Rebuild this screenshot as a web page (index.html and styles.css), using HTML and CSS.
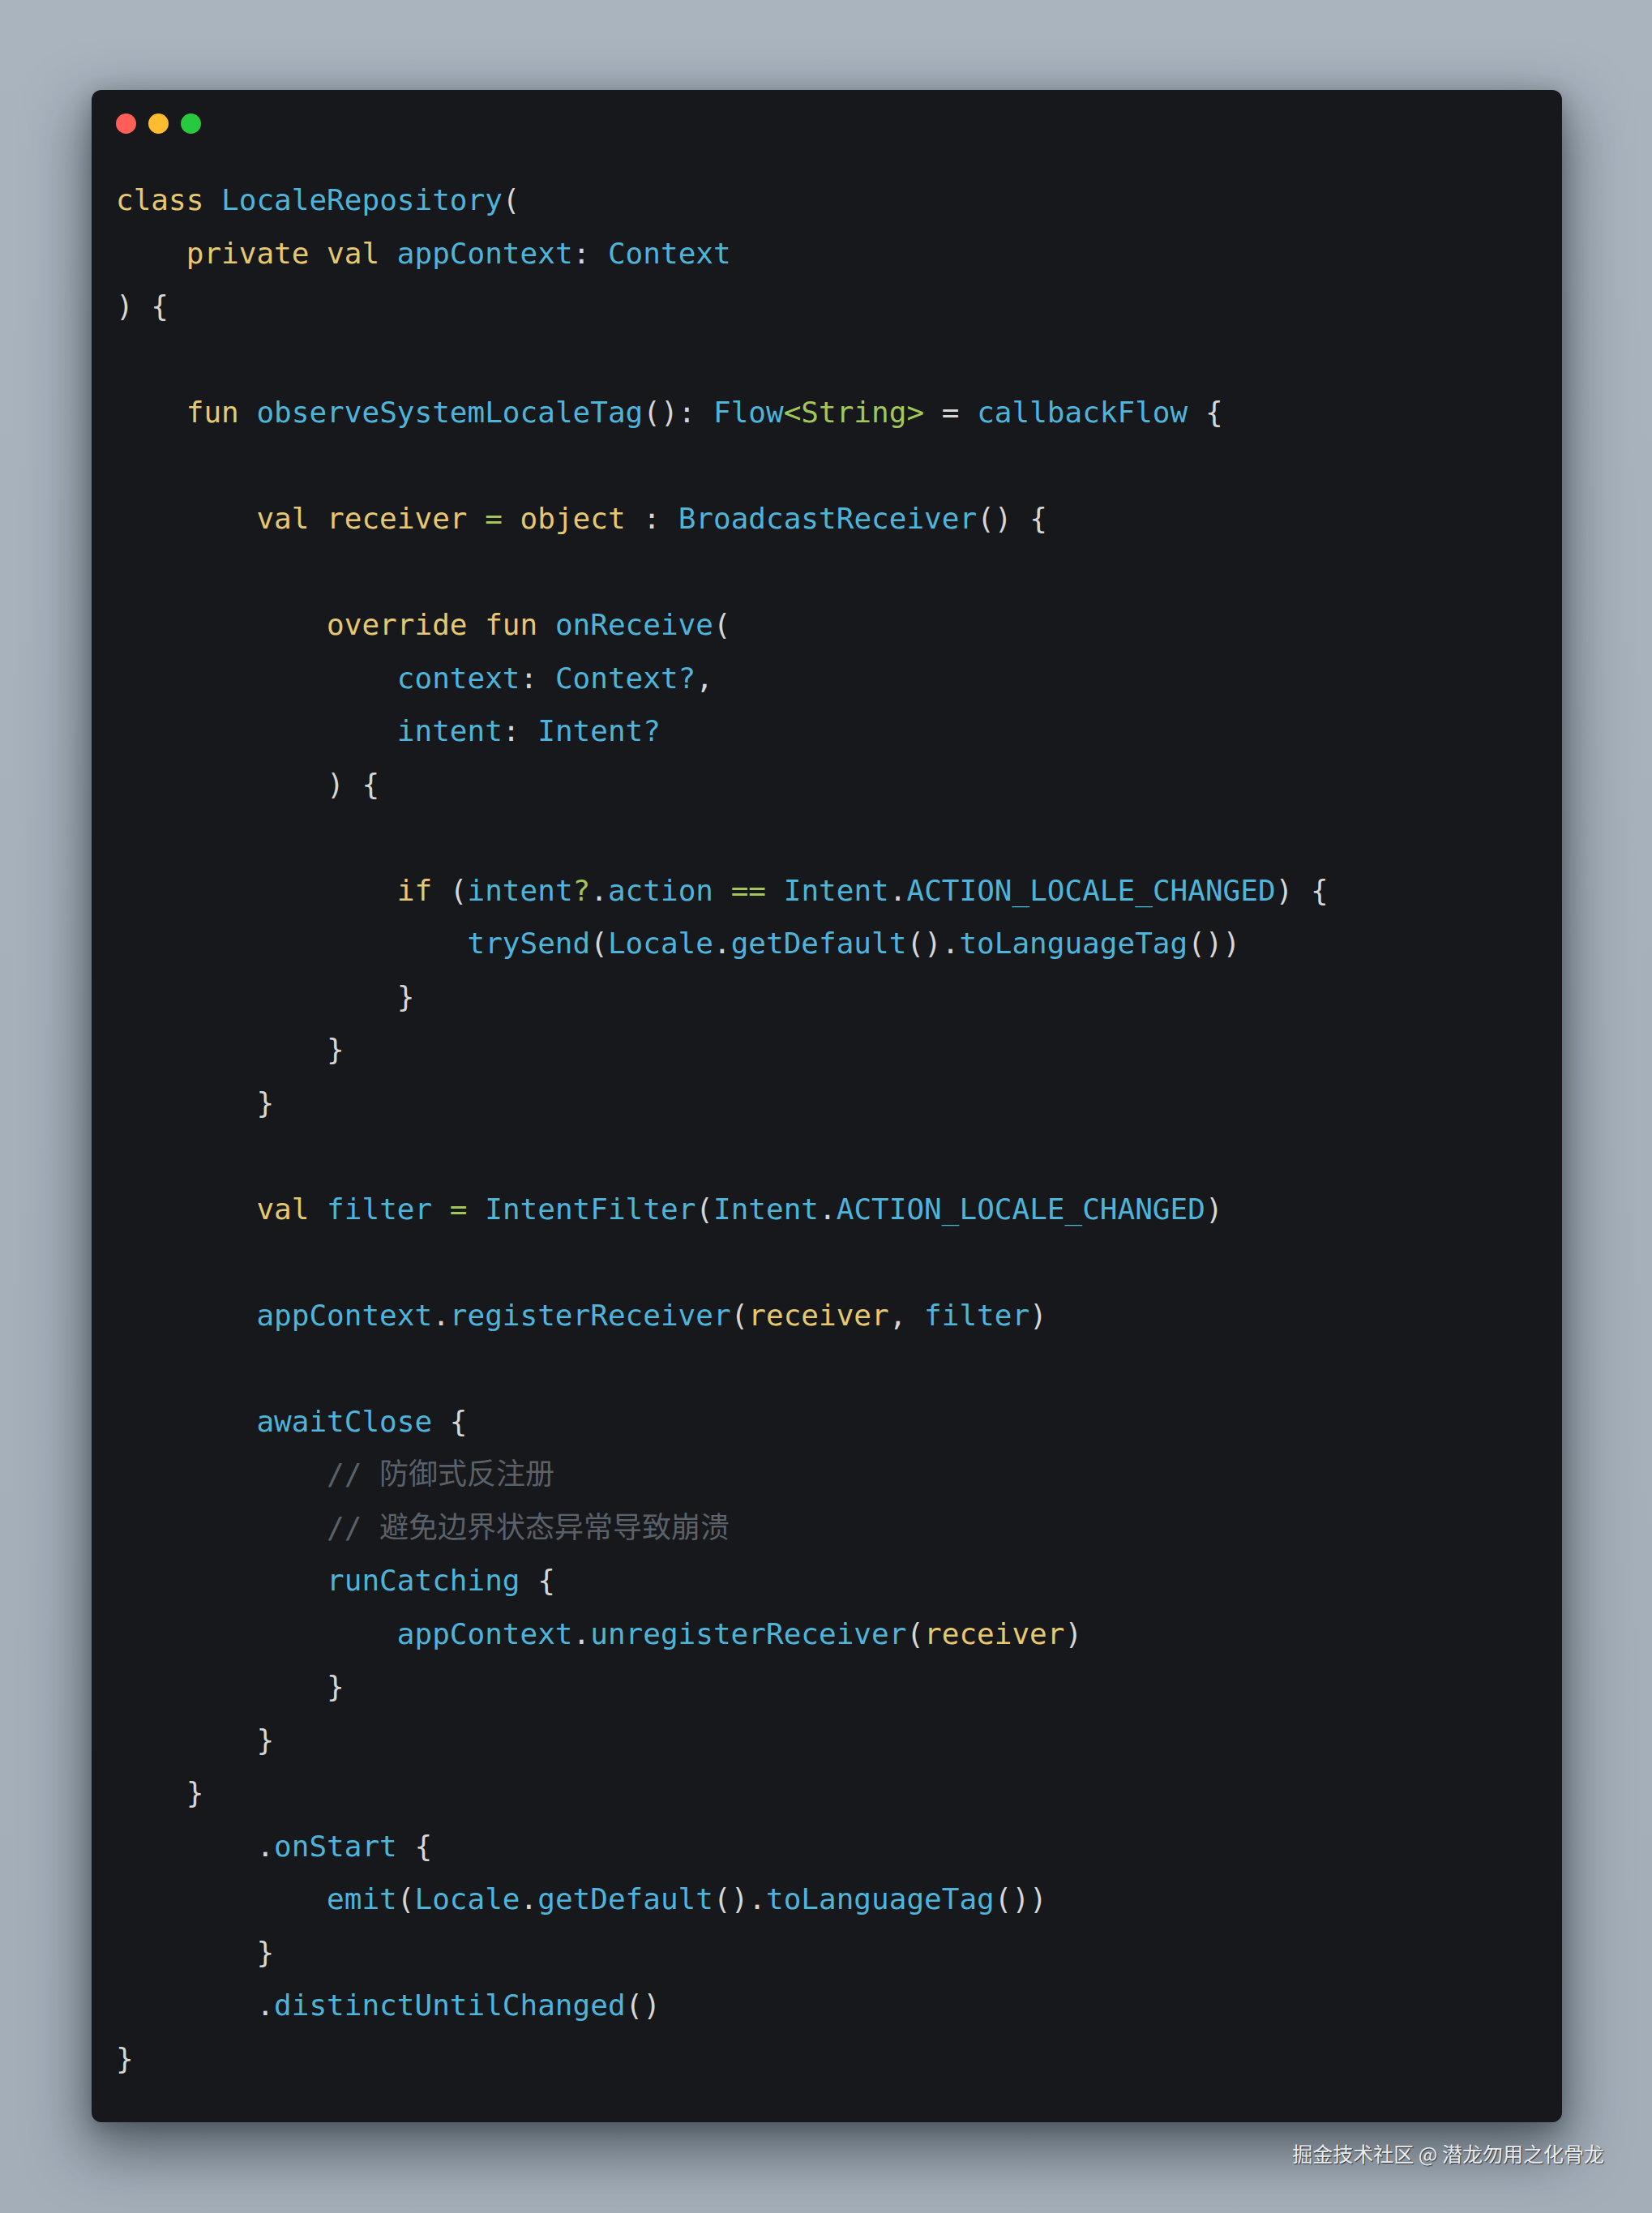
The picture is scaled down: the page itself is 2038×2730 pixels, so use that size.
FILE: index.html
```html
<!DOCTYPE html>
<html lang="zh-CN">
<head>
<meta charset="utf-8">
<title>LocaleRepository</title>
<link rel="stylesheet" href="styles.css">
</head>
<body>
<div class="page">
  <div class="window">
    <div class="dots">
      <span class="dot red"></span>
      <span class="dot yellow"></span>
      <span class="dot green"></span>
    </div>
<pre class="code"><span class="k">class</span> <span class="f">LocaleRepository</span><span class="p">(</span>
    <span class="k">private val</span> <span class="f">appContext</span><span class="p">:</span> <span class="f">Context</span>
<span class="p">) {</span>

    <span class="k">fun</span> <span class="f">observeSystemLocaleTag</span><span class="p">():</span> <span class="f">Flow</span><span class="o">&lt;String&gt;</span> <span class="p">=</span> <span class="f">callbackFlow</span> <span class="p">{</span>

        <span class="k">val receiver</span> <span class="o">=</span> <span class="k">object</span> <span class="p">:</span> <span class="f">BroadcastReceiver</span><span class="p">() {</span>

            <span class="k">override fun</span> <span class="f">onReceive</span><span class="p">(</span>
                <span class="f">context</span><span class="p">:</span> <span class="f">Context?</span><span class="p">,</span>
                <span class="f">intent</span><span class="p">:</span> <span class="f">Intent?</span>
            <span class="p">) {</span>

                <span class="k">if</span> <span class="p">(</span><span class="f">intent</span><span class="o">?</span><span class="p">.</span><span class="f">action</span> <span class="o">==</span> <span class="f">Intent</span><span class="p">.</span><span class="f">ACTION_LOCALE_CHANGED</span><span class="p">) {</span>
                    <span class="f">trySend</span><span class="p">(</span><span class="f">Locale</span><span class="p">.</span><span class="f">getDefault</span><span class="p">().</span><span class="f">toLanguageTag</span><span class="p">())</span>
                <span class="p">}</span>
            <span class="p">}</span>
        <span class="p">}</span>

        <span class="k">val</span> <span class="f">filter</span> <span class="o">=</span> <span class="f">IntentFilter</span><span class="p">(</span><span class="f">Intent</span><span class="p">.</span><span class="f">ACTION_LOCALE_CHANGED</span><span class="p">)</span>

        <span class="f">appContext</span><span class="p">.</span><span class="f">registerReceiver</span><span class="p">(</span><span class="k">receiver</span><span class="p">,</span> <span class="f">filter</span><span class="p">)</span>

        <span class="f">awaitClose</span> <span class="p">{</span>
            <span class="c">// 防御式反注册</span>
            <span class="c">// 避免边界状态异常导致崩溃</span>
            <span class="f">runCatching</span> <span class="p">{</span>
                <span class="f">appContext</span><span class="p">.</span><span class="f">unregisterReceiver</span><span class="p">(</span><span class="k">receiver</span><span class="p">)</span>
            <span class="p">}</span>
        <span class="p">}</span>
    <span class="p">}</span>
        <span class="p">.</span><span class="f">onStart</span> <span class="p">{</span>
            <span class="f">emit</span><span class="p">(</span><span class="f">Locale</span><span class="p">.</span><span class="f">getDefault</span><span class="p">().</span><span class="f">toLanguageTag</span><span class="p">())</span>
        <span class="p">}</span>
        <span class="p">.</span><span class="f">distinctUntilChanged</span><span class="p">()</span>
<span class="p">}</span></pre>
  </div>
  <div class="watermark">掘金技术社区 @ 潜龙勿用之化骨龙</div>
</div>
</body>
</html>
```

FILE: styles.css
```css
html, body {
  margin: 0;
  padding: 0;
}

body {
  width: 2038px;
  height: 2730px;
  overflow: hidden;
  background: linear-gradient(180deg, #a9b4bf 0%, #a5b0bb 50%, #a3aeb9 100%);
}

.page {
  position: relative;
  width: 2038px;
  height: 2730px;
  padding: 111px 0 0 113px;
  box-sizing: border-box;
}

.window {
  width: 1814px;
  box-sizing: border-box;
  background: #16181b;
  border-radius: 12px;
  padding: 29px 30px 46px 30px;
  box-shadow: 0 28px 70px 8px rgba(20, 26, 32, 0.52), 0 6px 24px rgba(20, 26, 32, 0.25);
}

.dots {
  display: flex;
  gap: 15px;
  height: 25px;
}

.dot {
  width: 25px;
  height: 25px;
  border-radius: 50%;
  display: block;
}

.red { background: #ff5f57; }
.yellow { background: #febc2e; }
.green { background: #28c840; }

.code {
  margin: 49px 0 0 0;
  font-family: "DejaVu Sans Mono", "Noto Sans CJK SC", monospace;
  font-size: 36px;
  line-height: 65.5px;
  color: #d6d6d6;
  white-space: pre;
}

.k { color: #e5c86f; }
.f { color: #4fb4da; }
.o { color: #a3c65a; }
.p { color: #d6d6d6; }
.c { color: #5a6169; }

.watermark {
  position: absolute;
  right: 59px;
  top: 2639px;
  font-family: "Noto Sans CJK SC", "Noto Sans", sans-serif;
  font-size: 25px;
  line-height: 34px;
  color: #e9edf0;
  text-shadow: 1px 1px 1px rgba(0, 0, 0, 0.65);
  white-space: nowrap;
}
```
